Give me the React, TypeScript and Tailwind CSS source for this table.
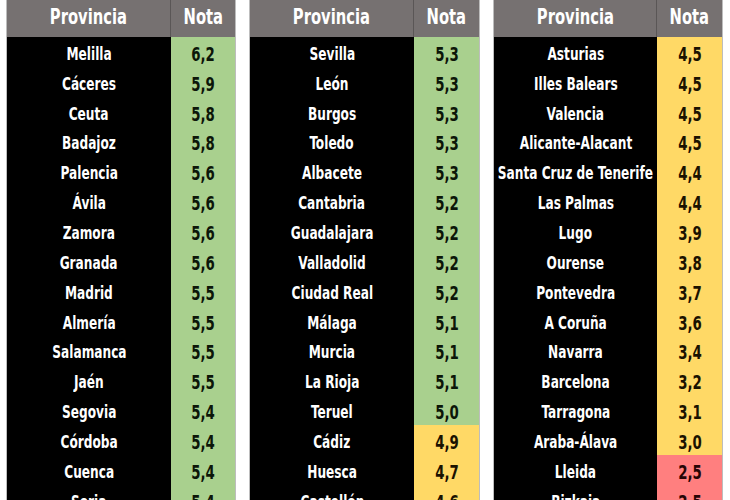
import React from 'react';

type Row = [string, string];

const tablas: Row[][] = [
  [
    ['Melilla', '6,2'], ['Cáceres', '5,9'], ['Ceuta', '5,8'], ['Badajoz', '5,8'],
    ['Palencia', '5,6'], ['Ávila', '5,6'], ['Zamora', '5,6'], ['Granada', '5,6'],
    ['Madrid', '5,5'], ['Almería', '5,5'], ['Salamanca', '5,5'], ['Jaén', '5,5'],
    ['Segovia', '5,4'], ['Córdoba', '5,4'], ['Cuenca', '5,4'], ['Soria', '5,4'],
  ],
  [
    ['Sevilla', '5,3'], ['León', '5,3'], ['Burgos', '5,3'], ['Toledo', '5,3'],
    ['Albacete', '5,3'], ['Cantabria', '5,2'], ['Guadalajara', '5,2'], ['Valladolid', '5,2'],
    ['Ciudad Real', '5,2'], ['Málaga', '5,1'], ['Murcia', '5,1'], ['La Rioja', '5,1'],
    ['Teruel', '5,0'], ['Cádiz', '4,9'], ['Huesca', '4,7'], ['Castellón', '4,6'],
  ],
  [
    ['Asturias', '4,5'], ['Illes Balears', '4,5'], ['Valencia', '4,5'], ['Alicante-Alacant', '4,5'],
    ['Santa Cruz de Tenerife', '4,4'], ['Las Palmas', '4,4'], ['Lugo', '3,9'], ['Ourense', '3,8'],
    ['Pontevedra', '3,7'], ['A Coruña', '3,6'], ['Navarra', '3,4'], ['Barcelona', '3,2'],
    ['Tarragona', '3,1'], ['Araba-Álava', '3,0'], ['Lleida', '2,5'], ['Bizkaia', '2,5'],
  ],
];

// colores tipo Excel según la nota
const notaClass = (nota: string) => {
  const n = parseFloat(nota.replace(',', '.'));
  if (n >= 5) return 'bg-[#a9d08e] text-[#0c1608]';
  if (n >= 3) return 'bg-[#ffd966] text-[#1a1200]';
  return 'bg-[#ff7f7f] text-[#260505]';
};

const Tabla = ({ filas, notaW }: { filas: Row[]; notaW: string }) => (
  <div className="flex flex-col min-w-0 border-x border-[#bdbdbd]">
    <div className="flex h-[37px] bg-[#767171] text-white text-[21px] leading-none">
      <div className="flex-1 min-w-0 flex items-center justify-center pb-[3px] border-r border-[#5a5656]">
        <span className="inline-block whitespace-nowrap scale-x-[0.78]">Provincia</span>
      </div>
      <div className={`${notaW} shrink-0 flex items-center justify-center pb-[3px]`}>
        <span className="inline-block scale-x-[0.78]">Nota</span>
      </div>
    </div>
    {filas.map(([prov, nota]) => (
      <div key={prov} className="flex h-[29.85px] leading-none">
        <div className="flex-1 min-w-0 flex items-center justify-center pt-[4px] bg-black text-white text-[18px]">
          <span className="inline-block whitespace-nowrap scale-x-[0.75]">{prov}</span>
        </div>
        <div className={`${notaW} shrink-0 flex items-center justify-center pt-[4px] text-[20px] ${notaClass(nota)}`}>
          <span className="inline-block scale-x-[0.74]">{nota}</span>
        </div>
      </div>
    ))}
  </div>
);

export default function App() {
  return (
    <div
      className="w-[730px] h-[500px] overflow-hidden bg-white pl-[6px] grid grid-cols-[230px_231px_230px] gap-x-[13px] font-bold"
      style={{ fontFamily: '"DejaVu Sans Condensed", "Liberation Sans", sans-serif' }}
    >
      <Tabla filas={tablas[0]} notaW="w-[64px]" />
      <Tabla filas={tablas[1]} notaW="w-[65px]" />
      <Tabla filas={tablas[2]} notaW="w-[65px]" />
    </div>
  );
}
